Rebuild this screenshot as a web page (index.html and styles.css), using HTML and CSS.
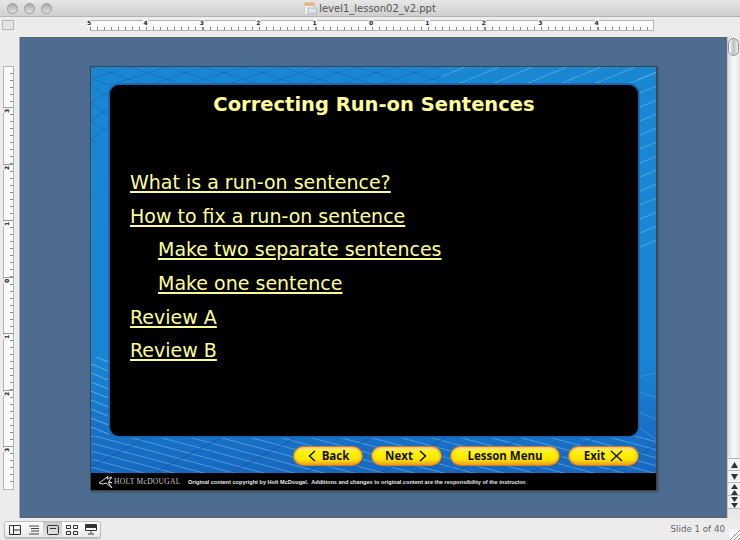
FILE: index.html
```html
<!DOCTYPE html>
<html lang="en">
<head>
<meta charset="utf-8">
<title>level1_lesson02_v2.ppt</title>
<link rel="stylesheet" href="styles.css">
</head>
<body>
<div class="app">
  <header class="titlebar">
    <div class="lights"><span class="light"></span><span class="light"></span><span class="light"></span></div>
    <div class="doc-title">
      <svg class="doc-icon" width="13" height="13" viewBox="0 0 13 13"><rect x="0.5" y="0.5" width="10" height="12" fill="#f4f1ea" stroke="#d0cdc6"/><rect x="1" y="1" width="9" height="3" fill="#eeb277"/><rect x="4" y="6" width="8.500" height="5.500" fill="#dbe4ee" stroke="#b4bcc8"/></svg>
      <span>level1_lesson02_v2.ppt</span>
    </div>
  </header>
  <div class="rulerbar">
    <span class="corner"></span>
    <div class="hruler">
      <span class="seg"><b>5</b></span><span class="seg"><b>4</b></span><span class="seg"><b>3</b></span><span class="seg"><b>2</b></span><span class="seg"><b>1</b></span><span class="seg"><b>0</b></span><span class="seg"><b>1</b></span><span class="seg"><b>2</b></span><span class="seg"><b>3</b></span><span class="seg"><b>4</b></span>
    </div>
  </div>
  <div class="middle">
    <aside class="vside">
      <div class="vruler">
        <span class="vseg first"></span><span class="vseg"><b>3</b></span><span class="vseg"><b>2</b></span><span class="vseg"><b>1</b></span><span class="vseg"><b>0</b></span><span class="vseg"><b>1</b></span><span class="vseg"><b>2</b></span><span class="vseg last"><b>3</b></span>
      </div>
    </aside>
    <main class="canvas">
      <section class="slide">
        <div class="stage">
          <svg class="waves" width="565" height="406" viewBox="0 0 565 406" aria-hidden="true">
            <defs>
              <pattern id="hatch" width="38" height="12" patternUnits="userSpaceOnUse">
                <path d="M0 0L38 12M0 12L38 0M-19 6L19 18M19 -6L57 6" fill="none" stroke="#0f64b4" stroke-opacity=".55" stroke-width="1"/>
              </pattern>
              <pattern id="hatch-left" width="26" height="18" patternUnits="userSpaceOnUse">
                <path d="M0 0L26 18M0 18L26 0" fill="none" stroke="#0f64b4" stroke-opacity=".6" stroke-width="1"/>
              </pattern>
              <pattern id="rise" width="34" height="14" patternUnits="userSpaceOnUse">
                <path d="M0 14L34 0" fill="none" stroke="#6fbdee" stroke-opacity=".55" stroke-width="1"/>
              </pattern>
              <pattern id="fall-left" width="40" height="9" patternUnits="userSpaceOnUse">
                <path d="M0 0L40 16M0 -9L40 7" fill="none" stroke="#9acdf0" stroke-opacity=".55" stroke-width="1"/>
              </pattern>
              <pattern id="fall" width="120" height="8" patternUnits="userSpaceOnUse">
                <path d="M0 0L120 32M0 -8L120 24M0 -16L120 16M0 -24L120 8" fill="none" stroke="#7db8ea" stroke-opacity=".55" stroke-width="1"/>
              </pattern>
              <pattern id="cross" width="75" height="40" patternUnits="userSpaceOnUse">
                <path d="M0 40L75 0" fill="none" stroke="#124fa6" stroke-opacity=".7" stroke-width="1"/>
              </pattern>
            </defs>
            <rect x="0" y="0" width="350" height="18" fill="url(#hatch)"/>
            <rect x="0" y="18" width="18" height="58" fill="url(#hatch-left)"/>
            <rect x="350" y="0" width="215" height="18" fill="url(#rise)"/>
            <rect x="547" y="0" width="18" height="180" fill="url(#rise)"/>
            <rect x="0" y="290" width="18" height="80" fill="url(#fall-left)"/>
            <rect x="0" y="369" width="565" height="37" fill="url(#fall)"/>
            <rect x="0" y="369" width="565" height="37" fill="url(#cross)"/>
            <path d="M547 310L565 306M547 325L565 330M547 345L565 352M547 360L565 372" fill="none" stroke="#5aa5e2" stroke-opacity=".5"/>
          </svg>
          <div class="panel">
            <h1 class="title">Correcting Run-on Sentences</h1>
            <nav class="links">
              <a class="link" href="#">What is a run-on sentence?</a>
              <a class="link" href="#">How to fix a run-on sentence</a>
              <a class="link sub" href="#">Make two separate sentences</a>
              <a class="link sub" href="#">Make one sentence</a>
              <a class="link" href="#">Review A</a>
              <a class="link" href="#">Review B</a>
            </nav>
          </div>
          <div class="buttons">
            <span class="btn back"><svg width="10" height="12" viewBox="0 0 10 12"><path d="M8 1L2.500 6L8 11" fill="none" stroke="#111" stroke-width="1.500"/></svg>Back</span>
            <span class="btn next">Next<svg width="10" height="12" viewBox="0 0 10 12"><path d="M2 1L7.500 6L2 11" fill="none" stroke="#111" stroke-width="1.500"/></svg></span>
            <span class="btn menu">Lesson Menu</span>
            <span class="btn exit">Exit<svg width="13" height="12" viewBox="0 0 13 12"><path d="M1 1L12 11M12 1L1 11" fill="none" stroke="#111" stroke-width="1.400"/></svg></span>
          </div>
        </div>
        <footer class="credit">
          <svg width="16" height="14" viewBox="0 0 16 14"><path d="M1 8L8 3L10 1L9 4L14 2L11 6L14 8L10 7L14 13L8 8L5 9Z" fill="none" stroke="#d8d8d8" stroke-width="1"/></svg>
          <span class="brand">HOLT McDOUGAL</span>
          <span class="notice">Original content copyright by Holt McDougal.&nbsp; Additions and changes to original content are the responsibility of the instructor.</span>
        </footer>
      </section>
    </main>
    <aside class="scrollbar">
      <div class="track"><span class="thumb"></span></div>
      <span class="arrow"><svg width="7" height="6" viewBox="0 0 7 6"><path d="M3.500 0L7 6H0Z"/></svg></span>
      <span class="arrow"><svg width="7" height="6" viewBox="0 0 7 6"><path d="M0 0H7L3.500 6Z"/></svg></span>
      <span class="arrow double"><svg width="7" height="11" viewBox="0 0 7 11"><path d="M3.500 0L7 5H0ZM3.500 6L7 11H0Z"/></svg></span>
      <span class="arrow double"><svg width="7" height="11" viewBox="0 0 7 11"><path d="M0 0H7L3.500 5ZM0 6H7L3.500 11Z"/></svg></span>
      <span class="scroll-end"></span>
    </aside>
  </div>
  <footer class="status">
    <div class="views">
      <span class="view"><svg width="12" height="10" viewBox="0 0 12 10"><path d="M.5.5h11v9H.5zM4.500.5v9M4.500 5h7" fill="none" stroke="#333"/></svg></span>
      <span class="view"><svg width="12" height="10" viewBox="0 0 12 10"><path d="M1 1h10M3 3.500h8M3 6h8M1 9h10" fill="none" stroke="#444"/></svg></span>
      <span class="view on"><svg width="12" height="10" viewBox="0 0 12 10"><rect x=".5" y=".5" width="11" height="9" rx="1" fill="none" stroke="#333"/><path d="M3 3.500h6" stroke="#333"/></svg></span>
      <span class="view"><svg width="12" height="10" viewBox="0 0 12 10"><path d="M.5.5h4v3h-4zM7.500.5h4v3h-4zM.5 6.500h4v3h-4zM7.500 6.500h4v3h-4z" fill="none" stroke="#333"/></svg></span>
      <span class="view"><svg width="12" height="11" viewBox="0 0 12 11"><path d="M.5.5h11v6H.5z" fill="#fff" stroke="#333"/><path d="M1 1.500h10v2H1zM6 7v2M3 10h6" stroke="#333" fill="#333"/></svg></span>
    </div>
    <div class="status-right">
      <span class="count">Slide 1 of 40</span>
      <svg class="grip" width="11" height="11" viewBox="0 0 11 11"><rect width="11" height="11" fill="#fafafa"/><path d="M1 11L11 1M5 11L11 5M9 11L11 9" stroke="#999" fill="none"/></svg>
    </div>
  </footer>
</div>
</body>
</html>
```
FILE: styles.css
```css
* { box-sizing: border-box; }
html, body { margin: 0; padding: 0; }
body { width: 740px; height: 540px; overflow: hidden; background: #e8e8e8; font-family: "DejaVu Sans", sans-serif; }
.app { display: flex; flex-direction: column; width: 740px; height: 540px; }

.titlebar { height: 17px; flex: none; display: flex; align-items: center; position: relative; justify-content: center; background: linear-gradient(#e6e6e6, #cfcfcf); border-bottom: 1px solid #b4b4b4; }
.lights { position: absolute; left: 7px; top: 3px; display: flex; gap: 6px; }
.light { width: 11px; height: 11px; border-radius: 50%; background: linear-gradient(#aaa, #e2e2e2); border: 1px solid #9c9c9c; }
.doc-title { display: flex; align-items: center; gap: 2px; font-size: 10px; color: #555; padding-top: 1px; }
.doc-icon { flex: none; margin-top: -1px; }

.rulerbar { height: 20px; flex: none; display: flex; align-items: flex-start; padding: 3px 0 0 2px; background: #ececec; }
.corner { width: 12px; height: 10px; border: 1px solid #b8b8b8; background: #e4e4e4; flex: none; }
.hruler { display: flex; margin-left: 76px; width: 564px; height: 11px; background: #fbfbfb; border: 1px solid #b4b4b4; border-left: 0; }
.seg { position: relative; width: 56.400px; flex: none; border-left: 1px solid #888; background: repeating-linear-gradient(90deg, transparent 0 6px, #8a8a8a 6px 7px) left bottom / 100% 3px no-repeat; }
.seg b { position: absolute; left: -4px; top: -2px; font: bold 6px/8px "DejaVu Sans", sans-serif; color: #222; background: #fbfbfb; }

.middle { flex: 1; min-height: 0; display: flex; }
.vside { width: 20px; flex: none; background: #ececec; padding: 29px 0 0 3px; border-right: 1px solid #aaa; }
.vruler { width: 11px; height: 424px; background: #fbfbfb; border: 1px solid #b4b4b4; display: flex; flex-direction: column; }
.vseg { position: relative; height: 56.500px; flex: none; border-top: 1px solid #999; background: repeating-linear-gradient(180deg, transparent 0 6px, #8a8a8a 6px 7px) right top / 3px 100% no-repeat; }
.vseg.first { height: 40px; border-top: 0; }
.vseg.last { height: 42px; }
.vseg b { position: absolute; left: 1px; top: -1px; font: bold 6px/8px "DejaVu Sans", sans-serif; color: #222; transform: rotate(-90deg); background: #fbfbfb; }

.canvas { flex: 1; min-width: 0; background: #4d6c8f; padding: 28px 0 0 70px; border-top: 1px solid #5e6367; border-bottom: 1px solid #5e6367; border-right: 1px solid #5e7186; }
.slide { width: 567px; height: 425px; border: 1px solid #3f4548; box-shadow: 1px 1px 2px #3a4756; display: flex; flex-direction: column; }

.stage { position: relative; flex: 1; background: linear-gradient(#1a87d3, #1a86d2 70%, #1873c8 88%, #1769c0); display: flex; flex-direction: column; padding: 18px 18px 0 18px; }
.waves { position: absolute; left: 0; top: 0; }
.panel { position: relative; height: 351px; flex: none; margin-left: 1px; background: #000; border-radius: 9px; box-shadow: 0 0 0 1px #1460ac, 0 0 0 2px #1a6fbb; padding: 7px 0 0 20px; }
.title { margin: 0 0 0 -20px; text-align: center; font: bold 19.500px/25px "DejaVu Sans", sans-serif; color: #ffff99; }
.links { display: flex; flex-direction: column; margin-top: 53px; gap: 8.700px; }
.link { display: block; align-self: flex-start; font-size: 19px; line-height: 25px; color: #ffff99; text-decoration: underline; text-decoration-thickness: 1.500px; text-underline-offset: 2px; }
.link.sub { margin-left: 28px; }

.buttons { position: relative; flex: none; display: flex; justify-content: flex-end; gap: 10px; margin-top: 10.500px; }
.btn { display: flex; align-items: center; justify-content: center; gap: 5px; height: 18px; border-radius: 9px; font: bold 11.500px/17px "Open Sans", "DejaVu Sans", sans-serif; color: #111; background: linear-gradient(#fde7a0 0, #fff200 32%, #ffe600 68%, #eda51c 100%); box-shadow: 0 0 0 1px #cf7a2c, inset 0 0 3px #e98a1e, 1px 1px 1px #0d3d78; }
.back { width: 68px; }
.next { width: 69px; }
.menu { width: 108px; }
.exit { width: 69px; }

.credit { height: 17px; flex: none; display: flex; align-items: center; background: #000; padding-left: 7px; color: #e8e8e8; }
.credit svg { flex: none; }
.brand { font: 7.500px/12px "Liberation Serif", serif; letter-spacing: 0.300px; color: #c9c9c9; width: 74px; flex: none; white-space: nowrap; }
.notice { font: bold 5.600px/12px "Liberation Sans", sans-serif; white-space: nowrap; }

.scrollbar { width: 13px; flex: none; background: #e8e8e8; display: flex; flex-direction: column; border-left: 1px solid #c4c4c4; }
.track { flex: 1; padding-top: 1px; background: linear-gradient(90deg, #dcdcdc, #fafafa 50%, #e4e4e4); border-bottom-left-radius: 6px; border-bottom-right-radius: 6px; }
.thumb { display: block; width: 11px; height: 18px; border-radius: 6px; background: linear-gradient(90deg, #fff, #b9c0c8 50%, #eee); border: 1px solid #8f8f8f; }
.arrow { display: flex; align-items: center; justify-content: center; height: 12px; flex: none; background: #f4f4f4; border-top: 1px solid #bbb; }
.arrow svg { fill: #333; }
.arrow.double { height: 13px; }
.scroll-end { height: 10px; flex: none; background: #e8e8e8; border-top: 1px solid #bbb; }

.status { height: 22px; flex: none; display: flex; justify-content: space-between; align-items: center; padding: 0 0 0 4px; background: #ececec; }
.views { display: flex; height: 17px; margin-top: 1px; border: 1px solid #bdbdbd; border-radius: 3px; background: linear-gradient(#fdfdfd, #eaeaea); box-shadow: 0 1px 1px #bbb; }
.view { width: 19px; display: flex; align-items: center; justify-content: center; }
.view.on { background: linear-gradient(#c9c9c9, #e4e4e4); }
.status-right { display: flex; align-items: flex-end; align-self: stretch; gap: 4px; }
.count { font-size: 8.700px; line-height: 21px; color: #666; }
.grip { flex: none; }
```
